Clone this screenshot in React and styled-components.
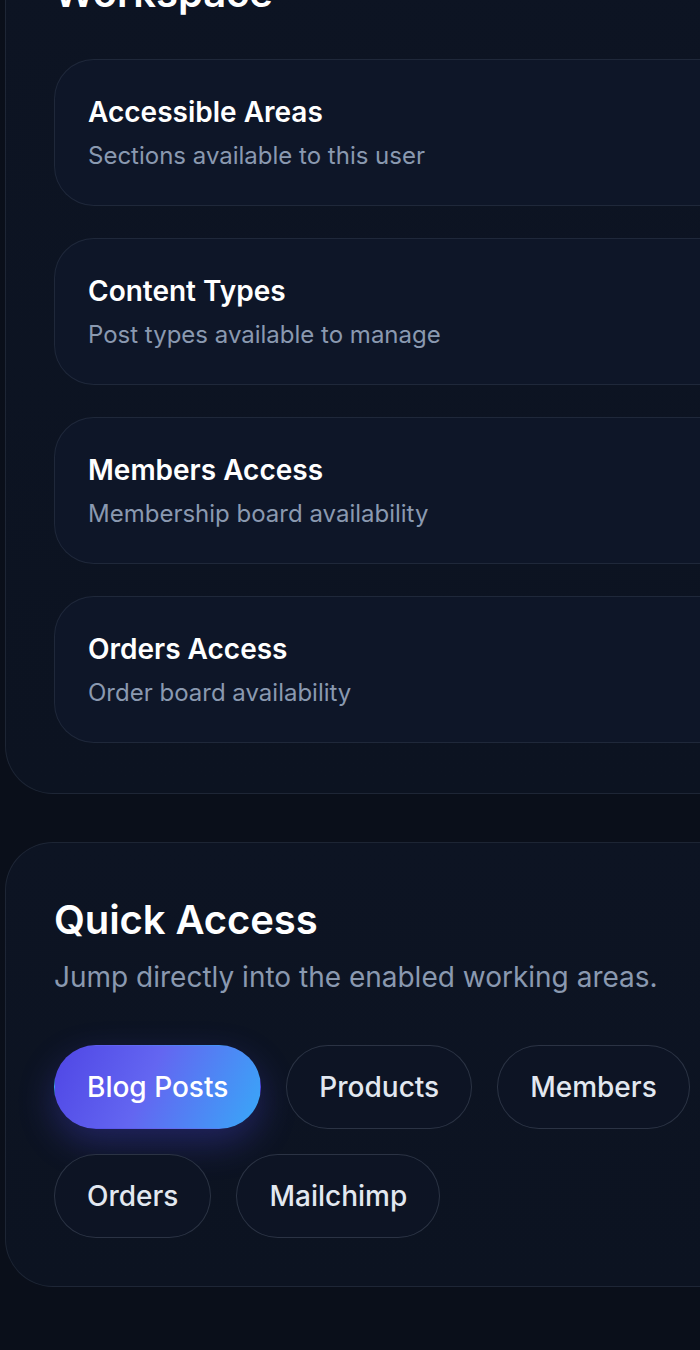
import React from "react";
import styled, { createGlobalStyle } from "styled-components";

const GlobalStyle = createGlobalStyle`
  html, body {
    margin: 0;
    padding: 0;
    background: #0a0f1a;
    overflow: hidden;
  }
  body {
    font-family: Inter, "Noto Sans", "Liberation Sans", sans-serif;
    color: #f8fafc;
    -webkit-font-smoothing: antialiased;
  }
  * { box-sizing: border-box; }
`;

const Page = styled.main`
  display: flex;
  flex-direction: column;
  gap: 48px;
  width: 830px;
  padding: 0 0 80px 5px;
  margin-top: -82px;
`;

const Panel = styled.section`
  display: flex;
  flex-direction: column;
  padding: ${(p) => p.$top || 48}px 48px ${(p) => p.$bottom || 48}px;
  border: 1px solid rgba(148, 163, 184, 0.13);
  border-radius: 48px;
  background: linear-gradient(180deg, #0d1423 0%, #0c1321 100%);
`;

const PanelTitle = styled.h2`
  margin: 0 0 ${(p) => p.$gap || 12}px;
  font-size: 40px;
  line-height: 52px;
  font-weight: 600;
  letter-spacing: -0.1px;
  color: #ffffff;
`;

const PanelLead = styled.p`
  margin: 0 0 47px;
  font-size: 28px;
  line-height: 42px;
  color: #8a99b0;
`;

const CardList = styled.div`
  display: flex;
  flex-direction: column;
  gap: 32px;
`;

const Card = styled.article`
  display: flex;
  flex-direction: column;
  gap: 6px;
  padding: 32px 33px 31px;
  border: 1px solid rgba(148, 163, 184, 0.13);
  border-radius: 40px;
  background: #0e1628;
`;

const CardTitle = styled.h3`
  margin: 0;
  font-size: 28px;
  line-height: 40px;
  font-weight: 600;
  color: #ffffff;
`;

const CardText = styled.p`
  margin: 0;
  font-size: 24px;
  line-height: 36px;
  color: #8a99b0;
`;

const ChipRow = styled.div`
  display: flex;
  flex-wrap: wrap;
  gap: 25px 25px;
  max-width: 720px;
`;

const Chip = styled.button`
  appearance: none;
  font-family: inherit;
  font-size: 28px;
  line-height: 42px;
  font-weight: 500;
  padding: 20px 32px;
  border-radius: 999px;
  cursor: pointer;
  color: ${(p) => (p.$active ? "#ffffff" : "#e2e8f0")};
  border: 1px solid ${(p) => (p.$active ? "transparent" : "rgba(148, 163, 184, 0.22)")};
  background: ${(p) =>
    p.$active
      ? "linear-gradient(115deg, #4f46e5 0%, #6366f1 45%, #38a8f8 100%)"
      : "#0d1424"};
  box-shadow: ${(p) => (p.$active ? "0 14px 36px rgba(79, 70, 229, 0.32)" : "none")};
`;

const cards = [
  { title: "Accessible Areas", text: "Sections available to this user" },
  { title: "Content Types", text: "Post types available to manage" },
  { title: "Members Access", text: "Membership board availability" },
  { title: "Orders Access", text: "Order board availability" },
];

const chips = ["Blog Posts", "Products", "Members", "Orders", "Mailchimp"];

export default function App() {
  return (
    <>
      <GlobalStyle />
      <Page>
        <Panel $bottom={50}>
          <PanelTitle $gap={40}>Workspace</PanelTitle>
          <CardList>
            {cards.map((c) => (
              <Card key={c.title}>
                <CardTitle>{c.title}</CardTitle>
                <CardText>{c.text}</CardText>
              </Card>
            ))}
          </CardList>
        </Panel>
        <Panel $top={51}>
          <PanelTitle $gap={10}>Quick Access</PanelTitle>
          <PanelLead>Jump directly into the enabled working areas.</PanelLead>
          <ChipRow>
            {chips.map((c, i) => (
              <Chip key={c} $active={i === 0}>
                {c}
              </Chip>
            ))}
          </ChipRow>
        </Panel>
      </Page>
    </>
  );
}
